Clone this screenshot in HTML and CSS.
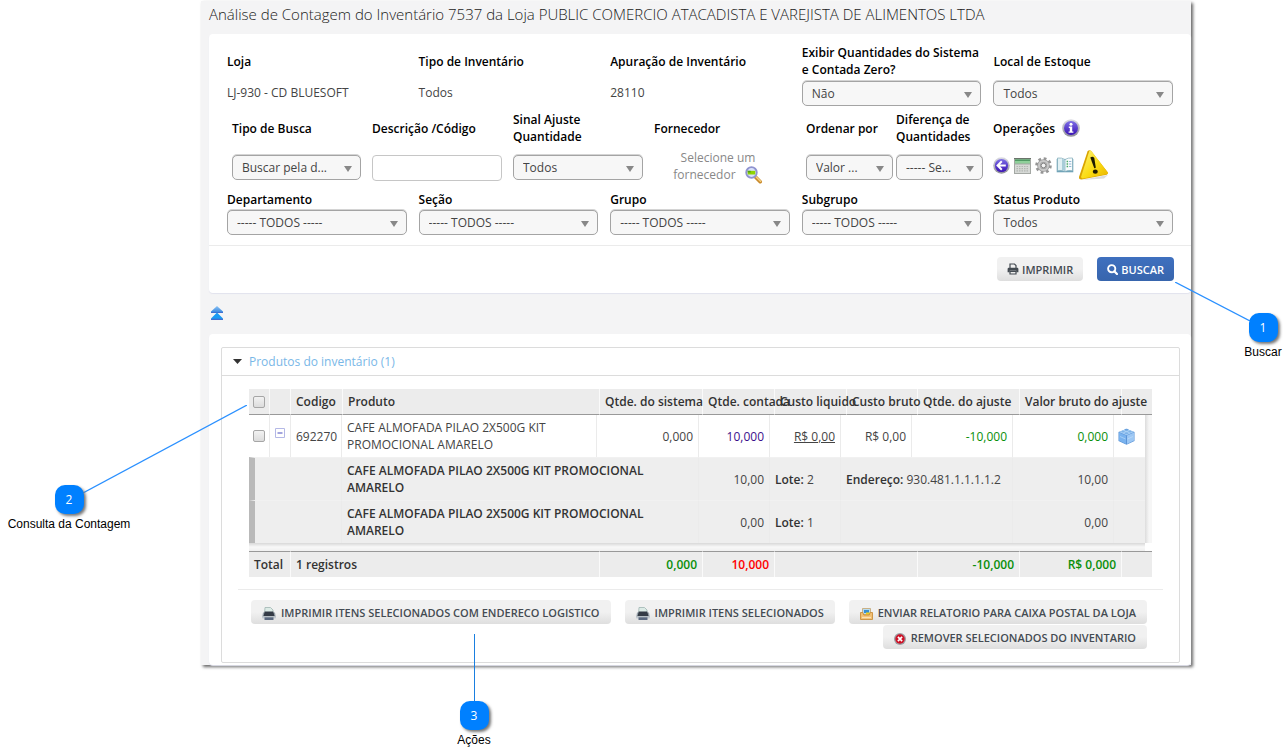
FILE: index.html
```html
<!DOCTYPE html>
<html lang="pt-BR">
<head>
<meta charset="utf-8">
<title>Análise de Contagem do Inventário</title>
<link rel="stylesheet" href="styles.css">
</head>
<body>
<svg class="defs" width="0" height="0" aria-hidden="true">
  <defs>
    <linearGradient id="purple" x1="0" y1="0" x2="0" y2="1"><stop offset="0" stop-color="#7d6fe6"/><stop offset="1" stop-color="#3a12b4"/></linearGradient>
    <linearGradient id="ring" x1="0" y1="0" x2="0" y2="1"><stop offset="0" stop-color="#dcdce4"/><stop offset="1" stop-color="#8e8e98"/></linearGradient>
    <linearGradient id="yellow" x1="0" y1="0" x2="1" y2="1"><stop offset="0" stop-color="#fdf27a"/><stop offset=".55" stop-color="#fbdc12"/><stop offset="1" stop-color="#e9b400"/></linearGradient>
    <linearGradient id="blue" x1="0" y1="0" x2="0" y2="1"><stop offset="0" stop-color="#8cc4f5"/><stop offset="1" stop-color="#2f7fdc"/></linearGradient>
    <symbol id="printer" viewBox="0 0 14 13">
      <path d="M3 .5h5.500L11 3v4H2.500z" fill="#dcebe6" stroke="#9fb5b2" stroke-width=".8"/>
      <path d="M1 5.500h12l.8 5H.2z" fill="#98a2aa"/>
      <path d="M2.800 4.500h8.400l1.300 4.500h-11z" fill="#343b46"/>
      <path d="M.3 9.300h13.400v2.200H.3z" fill="#c3cad0"/>
      <path d="M2.500 10.300h9V13h-9z" fill="#5c6a80"/>
    </symbol>
  </defs>
</svg>

<main class="stage">
  <div class="window">
    <h1 class="title">Análise de Contagem do Inventário 7537 da Loja PUBLIC COMERCIO ATACADISTA E VAREJISTA DE ALIMENTOS LTDA</h1>

    <form class="panel">
      <div class="filters">
        <div class="row five">
          <div class="field"><span class="label">Loja</span><span class="value">LJ-930 - CD BLUESOFT</span></div>
          <div class="field"><span class="label">Tipo de Inventário</span><span class="value">Todos</span></div>
          <div class="field"><span class="label">Apuração de Inventário</span><span class="value">28110</span></div>
          <div class="field"><label class="label" for="zero">Exibir Quantidades do Sistema e Contada Zero?</label><span class="pick"><select id="zero"><option>Não</option></select></span></div>
          <div class="field"><label class="label" for="local">Local de Estoque</label><span class="pick"><select id="local"><option>Todos</option></select></span></div>
        </div>

        <div class="row seven">
          <div class="field"><label class="label" for="tipo">Tipo de Busca</label><span class="pick"><select id="tipo"><option>Buscar pela d...</option></select></span></div>
          <div class="field"><label class="label" for="desc">Descrição /Código</label><input class="text" id="desc" type="text"></div>
          <div class="field"><label class="label" for="sinal">Sinal Ajuste Quantidade</label><span class="pick"><select id="sinal"><option>Todos</option></select></span></div>
          <div class="field"><span class="label">Fornecedor</span>
            <button class="supplier" type="button">Selecione um fornecedor
              <svg width="18" height="18" viewBox="0 0 18 18" aria-hidden="true"><path d="M10.500 11l4.700 4.700" stroke="#c98a2c" stroke-width="3.600" stroke-linecap="round"/><path d="M11 10.800l4.500 4.500" stroke="#f5cf7d" stroke-width="1.500" stroke-linecap="round"/><circle cx="6.500" cy="6.500" r="5.300" fill="#d9e2fa" stroke="#8f93cf" stroke-width="1.800"/><path d="M2.700 4.800h7.600v3.700H2.700z" fill="#8fd400"/><path d="M2.700 4.800h3v1.700h-3z" fill="#4f9c1a"/></svg>
            </button></div>
          <div class="field"><label class="label" for="ordem">Ordenar por</label><span class="pick"><select id="ordem"><option>Valor ...</option></select></span></div>
          <div class="field"><label class="label" for="dif">Diferença de Quantidades</label><span class="pick"><select id="dif"><option>----- Se...</option></select></span></div>
          <div class="field"><span class="label">Operações
              <svg class="info" width="18" height="18" viewBox="0 0 18 18" aria-hidden="true"><circle cx="9" cy="9" r="8.800" fill="url(#ring)"/><circle cx="9" cy="9" r="7" fill="url(#purple)"/><circle cx="9" cy="5.200" r="1.500" fill="#fff"/><path d="M6.800 7.600h3.400v4.800h1.200v1.400H6.600v-1.400h1.200V9H6.800z" fill="#fff"/></svg></span>
            <span class="tools">
              <button type="button" aria-label="Voltar"><svg width="17" height="17" viewBox="0 0 17 17"><circle cx="8.500" cy="8.500" r="8.300" fill="url(#ring)"/><circle cx="8.500" cy="8.500" r="6.600" fill="url(#purple)"/><path d="M8.800 4.300L4.600 8.500l4.200 4.200M5 8.500h7.800" fill="none" stroke="#fff" stroke-width="2"/></svg></button>
              <button type="button" aria-label="Calculadora"><svg width="17" height="16" viewBox="0 0 17 16"><path d="M0 0h17v16H0z" fill="#a4a8a4"/><path d="M0 0h17v1H0z" fill="#6b746b"/><path d="M1 1.500h15v4H1z" fill="#8fd09a"/><path d="M1 1.500h15v1.500H1z" fill="#4e9a63"/><path d="M1 6.500h15V15H1z" fill="#d6d9d6"/><path d="M2.500 8.500h12M2.500 10.700h12M2.500 12.900h12" stroke="#b2b6b2" stroke-width="1.200" stroke-dasharray="1.500 1"/></svg></button>
              <button type="button" aria-label="Configurar"><svg width="17" height="17" viewBox="0 0 17 17"><circle cx="8.500" cy="8.500" r="6.900" fill="none" stroke="#959595" stroke-width="2.800" stroke-dasharray="2.710 2.710"/><circle cx="8.500" cy="8.500" r="4.500" fill="#d2d2d2" stroke="#9a9a9a" stroke-width="3.600"/><circle cx="8.500" cy="8.500" r="4.500" fill="none" stroke="#c8c8c8" stroke-width="2"/><circle cx="8.500" cy="8.500" r="2.300" fill="#f4f4f4" stroke="#888"/></svg></button>
              <button type="button" aria-label="Relatório"><svg width="18" height="17" viewBox="0 0 18 17"><path d="M.7 2h16.600v13.300H.7z" fill="#6fa3b8"/><path d="M1.500 1Q6 .5 9 2.500v12Q6 12.800 1.500 13.800z" fill="#e2f1f4" stroke="#7da9b8" stroke-width=".7"/><path d="M9 2.500Q12 .5 16.500 1v12.800Q12 12.800 9 14.500z" fill="#f8fcfd" stroke="#7da9b8" stroke-width=".7"/><path d="M6 2q2 .3 3 1v11q-1-.8-3-1z" fill="#a8cdd8"/><path d="M10.600 4.500h1.500M10.600 7h1.500M10.600 9.500h1.500" stroke="#49a864" stroke-width="1.300"/><path d="M13 4.500h2.300M13 7h2.300M13 9.500h2.300" stroke="#93b6d6" stroke-width="1.100"/></svg></button>
              <button type="button" aria-label="Alerta"><svg width="31" height="33" viewBox="0 0 31 33"><path d="M3 31l27-5-4 3.500z" fill="#ddd"/><path d="M9.500 2.500Q11 .3 13 1.800L29.500 23q1 2.200-1 2.700L3.500 30.500Q.7 30.600 1 28z" fill="#d9a400"/><path d="M11.300 2Q12.500 1 13.500 2.300L29.600 23.300q.7 1.700-.8 2L4.800 29.500Q2.800 29.600 3.200 27.500z" fill="url(#yellow)"/><path d="M12.300 8.500q2.300-1.800 4 .4l1.500 9.600q-.6 1-1.600.4z" fill="#1d1a00"/><ellipse cx="17.300" cy="22.700" rx="2.500" ry="2.100" fill="#1d1a00"/></svg></button>
            </span></div>
        </div>

        <div class="row five last">
          <div class="field"><label class="label" for="dep">Departamento</label><span class="pick"><select id="dep"><option>----- TODOS -----</option></select></span></div>
          <div class="field"><label class="label" for="sec">Seção</label><span class="pick"><select id="sec"><option>----- TODOS -----</option></select></span></div>
          <div class="field"><label class="label" for="gru">Grupo</label><span class="pick"><select id="gru"><option>----- TODOS -----</option></select></span></div>
          <div class="field"><label class="label" for="sub">Subgrupo</label><span class="pick"><select id="sub"><option>----- TODOS -----</option></select></span></div>
          <div class="field"><label class="label" for="sta">Status Produto</label><span class="pick"><select id="sta"><option>Todos</option></select></span></div>
        </div>
      </div>
      <div class="submit">
        <button class="btn" type="button"><svg width="12" height="12" viewBox="0 0 12 12" aria-hidden="true"><path d="M3 5V1h4.500L9 2.500V5M3 8.500v2.500h6V8.500z" fill="none" stroke="#444b52" stroke-width="1.200"/><path d="M1.800 4.800h8.400q1.200 0 1.200 1.200v3.200H9.300V7.800H2.700v1.400H.6V6q0-1.200 1.200-1.200z" fill="#444b52"/></svg>IMPRIMIR</button>
        <button class="btn primary" type="button"><svg width="11" height="11" viewBox="0 0 11 11" aria-hidden="true"><circle cx="4.700" cy="4.700" r="3.600" fill="none" stroke="#fff" stroke-width="1.900"/><path d="M7.300 7.300l2.700 2.700" stroke="#fff" stroke-width="2.200" stroke-linecap="round"/></svg>BUSCAR</button>
      </div>
    </form>

    <button class="collapse" type="button" aria-label="Recolher filtros"><svg width="12" height="14" viewBox="0 0 12 14"><path d="M6 0l6 5.500V7H0V5.500z" fill="url(#blue)"/><path d="M0 6h12v1H0z" fill="#3f6fd0"/><path d="M6 6.500l6 6V14H0v-1.500z" fill="#1b9bf3"/><path d="M0 12.700h12V14H0z" fill="#3f6fd0"/></svg></button>

    <section class="panel results">
      <div class="box">
        <h2 class="box-head"><svg width="9" height="5" viewBox="0 0 9 5" aria-hidden="true"><path d="M0 0h9L4.500 5z" fill="#333"/></svg><a href="#produtos">Produtos do inventário (1)</a></h2>
        <div class="grid" id="produtos">
          <table class="tbl head">
            <colgroup><col class="w21"><col class="w21"><col class="w52"><col class="w257"><col class="w103"><col class="w72"><col class="w72"><col class="w71"><col class="w102"><col class="w102"><col class="w30"></colgroup>
            <thead><tr>
              <th class="mid"><input type="checkbox" aria-label="Selecionar todos"></th><th></th><th>Codigo</th><th>Produto</th><th>Qtde. do sistema</th><th>Qtde. contada</th><th>Custo liquido</th><th>Custo bruto</th><th>Qtde. do ajuste</th><th>Valor bruto do ajuste</th><th></th>
            </tr></thead>
          </table>
          <div class="scroll">
            <table class="tbl body">
              <colgroup><col class="w21"><col class="w21"><col class="w51"><col class="w255"><col class="w102"><col class="w71"><col class="w71"><col class="w71"><col class="w101"><col class="w101"><col class="w31"></colgroup>
              <tbody>
                <tr class="item">
                  <td class="mid"><input type="checkbox" aria-label="Selecionar 692270"></td>
                  <td class="mid"><button class="fold" type="button" aria-label="Recolher"><svg width="10" height="10" viewBox="0 0 10 10"><path d="M.5.5h9v9h-9z" fill="#fff" stroke="#b4b8e6"/><path d="M2.500 5h5" stroke="#7b7fd0" stroke-width="1.400"/></svg></button></td>
                  <td>692270</td><td class="wrap">CAFE ALMOFADA PILAO 2X500G KIT PROMOCIONAL AMARELO</td><td class="num">0,000</td><td class="num"><a class="purple" href="#contada">10,000</a></td><td class="num"><a class="under" href="#custo">R$ 0,00</a></td><td class="num">R$ 0,00</td><td class="num green">-10,000</td><td class="num green">0,000</td>
                  <td><svg class="cube" width="17" height="17" viewBox="0 0 17 17" aria-hidden="true"><path d="M8.500 1L16.500 4v9L8.500 16.700.5 13V4z" fill="#5b93d6"/><path d="M8.500.8L16 4 8.500 7.300 1 4z" fill="#a9d0f5"/><path d="M1 4.600l7 3v8.300l-7-3.300z" fill="#79b2ee"/><path d="M9 7.600l7-3v8l-7 3.300z" fill="#9cc7f4"/><path d="M2 8.500l5.500 2.500M9.500 11L15 8.500" stroke="#c4e0fa" stroke-width=".6"/><ellipse cx="8.500" cy="1.800" rx="2" ry="1" fill="#6ca3de"/><ellipse cx="5" cy="3.600" rx="1.800" ry=".9" fill="#7fb3e8"/><ellipse cx="12" cy="3.600" rx="1.800" ry=".9" fill="#7fb3e8"/><ellipse cx="8.500" cy="5.300" rx="2" ry="1" fill="#7fb3e8"/></svg></td>
                </tr>
                <tr class="lot">
                  <td colspan="3"></td><td class="wrap" colspan="2"><b>CAFE ALMOFADA PILAO 2X500G KIT PROMOCIONAL AMARELO</b></td><td class="num">10,00</td><td><b>Lote:</b> 2</td><td colspan="2"><b>Endereço:</b> 930.481.1.1.1.1.2</td><td class="num">10,00</td><td></td>
                </tr>
                <tr class="lot">
                  <td colspan="3"></td><td class="wrap" colspan="2"><b>CAFE ALMOFADA PILAO 2X500G KIT PROMOCIONAL AMARELO</b></td><td class="num">0,00</td><td><b>Lote:</b> 1</td><td colspan="2"></td><td class="num">0,00</td><td></td>
                </tr>
              </tbody>
            </table>
            <div class="vbar"></div>
            <div class="hbar"></div>
          </div>
          <table class="tbl foot">
            <colgroup><col class="w21"><col class="w21"><col class="w52"><col class="w257"><col class="w103"><col class="w72"><col class="w72"><col class="w71"><col class="w102"><col class="w102"><col class="w30"></colgroup>
            <tfoot><tr>
              <td colspan="2">Total</td><td colspan="2">1 registros</td><td class="num green">0,000</td><td class="num red">10,000</td><td colspan="2"></td><td class="num green">-10,000</td><td class="num green">R$ 0,000</td><td></td>
            </tr></tfoot>
          </table>
        </div>
        <div class="actions">
          <button class="btn" type="button"><svg class="ico" width="14" height="13" aria-hidden="true"><use href="#printer"/></svg>IMPRIMIR ITENS SELECIONADOS COM ENDERECO LOGISTICO</button>
          <button class="btn" type="button"><svg class="ico" width="14" height="13" aria-hidden="true"><use href="#printer"/></svg>IMPRIMIR ITENS SELECIONADOS</button>
          <button class="btn" type="button"><svg class="ico" width="13" height="12" viewBox="0 0 13 12" aria-hidden="true"><path d="M2.500.5h8v6h-8z" fill="#b7dcf2" stroke="#c7a36a" stroke-width=".8"/><path d="M4 2h5v3H4z" fill="#3a8fd0"/><path d="M6 4.500h4v2H6z" fill="#f3d21c"/><path d="M.5 4.500h2.300l1 2.500h5.400l1-2.500h2.300v7H.5z" fill="#f2bf72" stroke="#c98f3d" stroke-width=".9"/><path d="M2 9.500h9" stroke="#fbe2b4" stroke-width="1.300"/></svg>ENVIAR RELATORIO PARA CAIXA POSTAL DA LOJA</button>
          <button class="btn" type="button"><svg class="ico" width="12" height="12" viewBox="0 0 12 12" aria-hidden="true"><circle cx="6" cy="6" r="6" fill="#9c9ca2"/><circle cx="6" cy="6" r="4.700" fill="#cf1126"/><path d="M3.900 3.900l4.200 4.200M8.100 3.900L3.900 8.100" stroke="#fff" stroke-width="1.700"/></svg>REMOVER SELECIONADOS DO INVENTARIO</button>
        </div>
      </div>
    </section>

    <svg class="line line-1" width="75" height="39" viewBox="0 0 75 39" aria-hidden="true"><path d="M0 0l75 39" stroke="#2a90ff" stroke-width="1.200"/></svg>
    <svg class="line line-2" width="164" height="88" viewBox="0 0 164 88" aria-hidden="true"><path d="M0 88L164 0" stroke="#2a90ff" stroke-width="1.200"/></svg>
    <div class="line line-3"></div>
    <div class="callout callout-1"><span class="badge">1</span>Buscar</div>
    <div class="callout callout-2"><span class="badge">2</span>Consulta da Contagem</div>
    <div class="callout callout-3"><span class="badge">3</span>Ações</div>
  </div>
</main>
</body>
</html>
```
FILE: styles.css
```css
* { box-sizing: border-box; }
body {
  margin: 0;
  background: #fff;
  color: #444;
  font: 12px/17px "Open Sans", sans-serif;
}
.defs { position: absolute; }
button, input, select { font: inherit; color: inherit; margin: 0; }
button { border: 0; padding: 0; background: none; cursor: pointer; }
svg { display: block; flex: none; }

.stage { padding: 1px 95px 84px 201px; }
.window {
  position: relative;
  padding: 1px 0 0 8px;
  background: #f4f4f5;
  box-shadow: 2px 2px 3px #666;
}
.title {
  margin: 0;
  height: 32px;
  font-size: 15px;
  font-weight: 300;
  line-height: 24px;
  white-space: nowrap;
  color: #222;
}
.panel {
  display: block;
  background: #fff;
  border-radius: 4px;
  box-shadow: 0 1px 1px #e2e3ee;
}

/* Filters */
.filters { padding: 10px 18px 10px; border-bottom: 1px solid #ebebeb; }
.row { display: grid; }
.five { grid-template-columns: repeat(5, 1fr); column-gap: 12px; }
.seven { grid-template-columns: 140fr 141fr 141fr 152fr 90fr 97fr 180fr; padding: 5px 0 5px 5px; }
.field { display: flex; flex-direction: column; min-width: 0; }
.label {
  display: flex;
  align-items: center;
  height: 34px;
  font-weight: 600;
  color: #000;
}
.value { display: flex; align-items: center; height: 28px; }
.pick { position: relative; display: block; margin-top: 2px; }
.five .pick { margin-top: 3px; }
.pick::after {
  content: "";
  position: absolute;
  right: 9px;
  top: 11px;
  border: solid transparent;
  border-width: 6px 4px 0;
  border-top-color: #888;
  pointer-events: none;
}
.pick select {
  display: block;
  appearance: none;
  width: 100%;
  height: 25px;
  padding: 0 20px 0 9px;
  border: 1px solid #a4a4a4;
  border-radius: 5px;
  background: #f7f7f7;
  box-shadow: 0 -1px 0 #d4d4d4;
  color: #444;
}
.seven .field { padding-right: 11px; }
.seven .field:nth-child(5) { padding-right: 3px; }
.seven .field:nth-child(6) { padding-right: 10px; }
.seven .field:last-child { padding-right: 0; }
.seven .pick, .seven .text { margin-top: 10px; }
.text {
  height: 26px;
  padding: 0 8px;
  border: 1px solid #c6c6c6;
  border-radius: 4px;
  background: #fff;
}
.supplier { align-self: flex-start; width: 128px; margin-top: 4px; color: #888; text-align: center; }
.supplier svg { display: inline-block; vertical-align: top; margin-left: 6px; }
.info { margin-left: 7px; }
.tools { display: flex; align-items: center; gap: 4px; height: 41px; }
.last .label { height: 17px; }
.last .pick { margin-top: 2px; }
.submit { display: flex; justify-content: flex-end; gap: 14px; padding: 11px 17px 12px; }

.btn {
  display: inline-flex;
  align-items: center;
  gap: 3px;
  height: 24px;
  padding: 0 10px;
  border-radius: 4px;
  background: linear-gradient(#f1f1f1 50%, #dedede);
  color: #444b52;
  font-size: 11px;
  font-weight: 600;
  white-space: nowrap;
}
.primary { background: linear-gradient(#3f70bf, #3765ad); color: #fff; }
.collapse { display: block; margin: 13px 0 14px 2px; }

/* Results */
.results { padding: 13px 11px 2px 12px; }
.box { border: 1px solid #dcdcdc; border-radius: 2px; }
.box-head {
  display: flex;
  align-items: center;
  gap: 7px;
  height: 28px;
  margin: 0;
  padding: 0 11px;
  border-bottom: 1px solid #dcdcdc;
  font-size: 12px;
  font-weight: 400;
}
.box-head a { color: #79b7e7; text-decoration: none; }
.grid { margin: 13px 27px 0; }
.tbl { width: 100%; table-layout: fixed; border-collapse: separate; border-spacing: 0; color: #444; }
.w21 { width: 21px; } .w30 { width: 30px; } .w31 { width: 31px; }
.w51 { width: 51px; } .w52 { width: 52px; } .w71 { width: 71px; }
.w72 { width: 72px; } .w101 { width: 101px; } .w102 { width: 102px; }
.w103 { width: 103px; } .w255 { width: 255px; } .w257 { width: 257px; }
.tbl th, .tbl td {
  padding: 0 5px;
  border-right: 1px solid #ebebeb;
  text-align: left;
  white-space: nowrap;
}
.tbl th, .foot td { background: #ececec; border-right-color: #fafafa; font-weight: 600; color: #333; }
.tbl th:last-child, .tbl td:last-child { border-right: 0; }
.head th { height: 26px; border-bottom: 1px solid #999; }
.foot td { height: 26px; border-top: 1px solid #999; }
.tbl .mid { padding: 0; text-align: center; }
.tbl .wrap { white-space: normal; padding: 0 40px 0 5px; }
.tbl .num { text-align: right; }
.tbl .green { color: #0a8f0a; }
.tbl .red { color: #f00; }
.purple { color: #3b0f8c; text-decoration: none; }
.under { color: inherit; }
.tbl b { font-weight: 600; color: #333; }
.body td { height: 43px; }
.body .item td { height: 42px; }
.lot td { background: #eee; border-top: 1px solid #f1f1f1; }
.lot td:first-child { border-left: 6px solid #b9b9b9; }
.tbl input {
  display: block;
  appearance: none;
  width: 12px;
  height: 12px;
  margin: 0 auto;
  border: 1px solid #a6a6a6;
  border-radius: 2px;
  background: linear-gradient(#f2f2f2, #dcdcdc);
}
.fold { display: block; margin: 0 auto 6px; }
.cube { margin-left: -1px; }
.scroll { display: grid; grid-template-columns: 1fr 7px; }
.vbar { background: linear-gradient(to right, #dcdcdc, #f6f6f6 4px); }
.hbar { height: 8px; background: linear-gradient(#d8d8d8, #f8f8f8 4px, #f0f0f0); }

.actions {
  display: flex;
  flex-wrap: wrap;
  justify-content: flex-end;
  gap: 1px 14px;
  margin: 12px 16px 0;
  padding: 10px 16px 13px 0;
  border-top: 1px solid #ebebeb;
}
.actions .btn { gap: 5px; padding: 0 11px; }
.actions .ico { margin-top: 3px; }

/* Numbered callouts around the window */
.line { position: absolute; }
.line-1 { right: -59px; top: 281px; }
.line-2 { left: -118px; top: 404px; }
.line-3 { left: 273px; bottom: -37px; width: 1px; height: 68px; background: #1a7fe0; }
.callout {
  position: absolute;
  display: flex;
  flex-direction: column;
  align-items: center;
  width: 130px;
  font: 12px/16px "Liberation Sans", Arial, sans-serif;
  color: #000;
  white-space: nowrap;
}
.badge {
  width: 29px;
  height: 29px;
  margin-bottom: 2px;
  border-radius: 10px;
  background: #0080ff;
  box-shadow: 2px 2px 3px #777;
  font: 12px/29px "Open Sans", sans-serif;
  color: #fff;
  text-align: center;
}
.callout-1 { right: -92px; top: 312px; width: 40px; }
.callout-2 { left: -197px; top: 484px; }
.callout-3 { left: 208px; bottom: -83px; }
```
